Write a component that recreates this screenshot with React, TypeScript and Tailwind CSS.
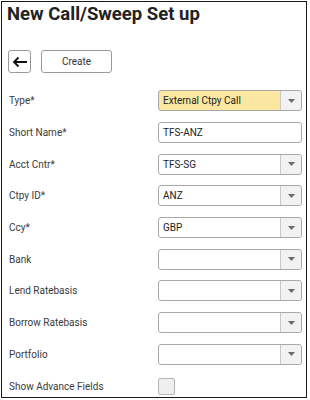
import React from "react";

const Chevron = () => (
  <div className="w-[21px] h-full flex items-center justify-center bg-[#f2f2f2] border-l border-[#c8c8c8] rounded-r-[3px]">
    <svg width="7" height="4" viewBox="0 0 7 4">
      <path d="M0 0 L7 0 L3.5 4 Z" fill="#6b6b6b" />
    </svg>
  </div>
);

type Row = { label: string; kind: "select" | "input" | "check"; value?: string; yellow?: boolean };

const rows: Row[] = [
  { label: "Type*", kind: "select", value: "External Ctpy Call", yellow: true },
  { label: "Short Name*", kind: "input", value: "TFS-ANZ" },
  { label: "Acct Cntr*", kind: "select", value: "TFS-SG" },
  { label: "Ctpy ID*", kind: "select", value: "ANZ" },
  { label: "Ccy*", kind: "select", value: "GBP" },
  { label: "Bank", kind: "select", value: "" },
  { label: "Lend Ratebasis", kind: "select", value: "" },
  { label: "Borrow Ratebasis", kind: "select", value: "" },
  { label: "Portfolio", kind: "select", value: "" },
  { label: "Show Advance Fields", kind: "check" },
];

export default function App() {
  return (
    <div className="w-[310px] h-[400px] bg-white" style={{ fontFamily: "Roboto, 'Liberation Sans', sans-serif" }}>
      <div className="ml-[1px] mt-[1px] w-[306px] h-[397px] border border-[#1a1a1a] overflow-hidden flex flex-col">
        <div className="pl-[5px] pt-[1px] text-[18.5px] leading-[22px] font-bold text-[#222]">
          New Call/Sweep Set up
        </div>
        <div className="mt-[25px] pl-[6px] flex gap-[10px]">
          <div className="w-[23px] h-[23px] border border-[#9a9a9a] rounded-[3px] flex items-center justify-center bg-white">
            <svg width="16" height="12" viewBox="0 0 16 12">
              <path d="M15 6 H2 M6.5 1.5 L2 6 L6.5 10.5" stroke="#111" strokeWidth="1.8" fill="none" />
            </svg>
          </div>
          <div className="w-[71px] h-[23px] border border-[#9a9a9a] rounded-[3px] flex items-center justify-center text-[10px] text-[#333] bg-white">
            Create
          </div>
        </div>
        <div className="mt-[12px] flex flex-col">
          {rows.map((r) => (
            <div key={r.label} className="h-[31.7px] shrink-0 flex items-center pl-[7px]">
              <div className="w-[149px] text-[10px] text-[#3a3a3a]">{r.label}</div>
              {r.kind === "select" && (
                <div
                  className={`w-[144px] h-[21px] border border-[#a8a8a8] rounded-[3px] flex items-center ${
                    r.yellow ? "bg-[#fbe7a1]" : "bg-white"
                  }`}
                >
                  <div className="flex-1 pl-[4px] text-[10px] text-[#222]">{r.value}</div>
                  <Chevron />
                </div>
              )}
              {r.kind === "input" && (
                <div className="w-[144px] h-[21px] border border-[#a8a8a8] rounded-[3px] flex items-center bg-white">
                  <div className="pl-[4px] text-[10px] text-[#222]">{r.value}</div>
                </div>
              )}
              {r.kind === "check" && (
                <div className="w-[17px] h-[17px] border border-[#b5b5b5] rounded-[2px] bg-[#efefef]" />
              )}
            </div>
          ))}
        </div>
      </div>
    </div>
  );
}
